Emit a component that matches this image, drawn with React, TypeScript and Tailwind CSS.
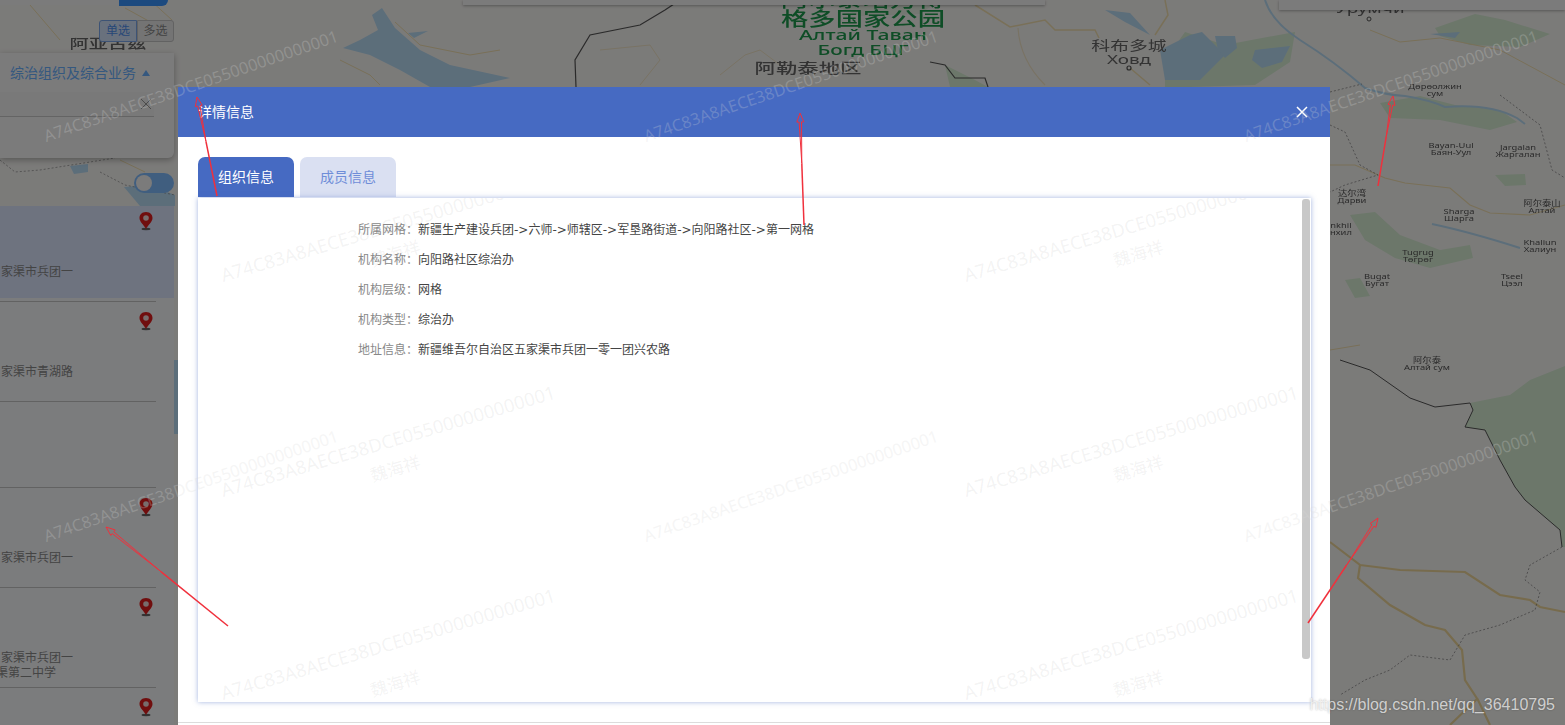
import React from 'react';

const cjk = "font-['DejaVu_Sans','Noto_Sans_CJK_SC',sans-serif]";

const MapLabel = ({ x, y, lines, big }: { x: number; y: number; lines: string[]; big?: boolean }) => (
  <>
    {lines.map((line, i) => (
      <text
        key={line}
        transform={`translate(${x} ${y + i * (big ? 14 : 7)}) scale(${big ? 1.45 : 1.25} 1)`}
        textAnchor="middle"
        fontSize={big ? 13 : 7.5}
        fill={big ? '#666' : '#555'}
        fontFamily="'Noto Sans','Noto Sans CJK SC',sans-serif"
      >
        {line}
      </text>
    ))}
  </>
);

const GreenLabel = ({ y, w, size, x = 863, fill = '#1c9a4c', children }: { y: number; w: number; size: number; x?: number; fill?: string; children: string }) => (
  <text
    x={x}
    y={y}
    textAnchor="middle"
    fontSize={size}
    fontWeight={500}
    fill={fill}
    textLength={w}
    lengthAdjust="spacingAndGlyphs"
    fontFamily="'Noto Sans','Noto Sans CJK SC',sans-serif"
  >
    {children}
  </text>
);

const MapBackground = () => (
  <svg className="absolute inset-0 blur-[0.6px]" width={1565} height={725} viewBox="0 0 1565 725">
    <rect width={1565} height={725} fill="#f7f6f3" />

    {/* green areas */}
    <path d="M1165 60 L1185 32 L1225 45 L1262 38 L1295 32 L1290 62 L1255 85 L1190 87 L1165 87 Z" fill="#d8efd4" />
    <path d="M1435 28 L1475 14 L1505 20 L1550 34 L1520 47 L1470 45 L1440 36 Z" fill="#d8efd4" />
    <path d="M1380 103 L1420 96 L1455 105 L1500 110 L1517 122 L1490 130 L1440 120 L1390 118 Z" fill="#d8efd4" />
    <path d="M1350 215 L1375 212 L1400 235 L1440 250 L1470 245 L1473 258 L1430 268 L1395 258 L1365 240 Z" fill="#d8efd4" />
    <path d="M1345 280 L1360 278 L1370 296 L1355 298 Z" fill="#d8efd4" />
    <path d="M1495 175 L1525 174 L1526 185 L1505 186 Z" fill="#d8efd4" />
    <path d="M1470 403 L1510 395 L1530 380 L1565 366 L1565 547 L1562 547 L1560 530 L1525 500 L1515 487 L1500 460 L1485 430 L1465 427 L1473 410 Z" fill="#d8efd4" />
    <path d="M945 65 L975 80 L988 87 L950 87 Z" fill="#d8efd4" />
    <path d="M820 0 L940 0 L920 14 L860 16 Z" fill="#e8f0e4" />

    {/* water */}
    <path d="M343 48 L360 40 L378 30 L372 15 L382 8 L395 28 L420 50 L450 65 L510 78 L470 87 L430 87 L400 70 L370 55 Z" fill="#b8dcf5" />
    <path d="M408 33 L428 31 L414 38 Z" fill="#b8dcf5" />
    <path d="M1160 50 L1190 35 L1202 32 L1225 55 L1200 80 L1165 80 Z" fill="#b8dcf5" />
    <path d="M1215 36 L1235 36 L1237 48 L1225 58 L1218 50 Z" fill="#b8dcf5" />
    <path d="M1255 50 L1290 46 L1282 62 L1262 68 L1252 60 Z" fill="#b8dcf5" />
    <path d="M1105 10 L1130 13 L1150 35 L1125 22 Z" fill="#b8dcf5" />
    <path d="M1265 0 Q1272 22 1300 40 Q1335 62 1365 88 Q1385 95 1405 96 Q1430 100 1445 107 Q1490 103 1517 118 L1525 124" fill="none" stroke="#b8dcf5" strokeWidth={2} />
    <path d="M1430 34 L1460 32 L1455 38 Z" fill="#b8dcf5" />
    <path d="M1432 224 Q1470 232 1520 248" fill="none" stroke="#b8dcf5" strokeWidth={2} />
    <path d="M124 187 L150 185 L175 195 L175 206 L140 206 Z" fill="#b8dcf5" />
    <path d="M70 166 L88 164 L88 172 L74 174 Z" fill="#b8dcf5" />
    <rect x={172} y={360} width={6} height={74} fill="#b8dcf5" />

    {/* roads */}
    <path d="M975 5 L1010 27 L1045 20 L1055 30 L1095 30 L1099 38 M1165 0 L1168 15 L1155 35 M1130 68 L1150 85" fill="none" stroke="#f2e0b0" strokeWidth={1.5} />
    <path d="M1018 28 Q1020 60 1045 85" fill="none" stroke="#f2e6c8" strokeWidth={1.2} />
    <path d="M1330 165 L1355 165 L1385 178 L1405 183 L1450 188 L1470 205 L1490 213 L1530 215 L1565 205" fill="none" stroke="#f2e0b0" strokeWidth={1.2} />
    <path d="M1330 350 L1360 345 M1370 30 L1400 42 L1440 38 L1500 50 L1565 85" fill="none" stroke="#f2e0b0" strokeWidth={1} />
    <path d="M1330 542 L1360 565 L1358 578 L1390 605 L1425 625 L1445 630 L1462 650 L1465 680 L1478 700 L1490 725 M1360 565 L1400 570 L1465 572 L1500 595 L1530 600 L1540 607 L1565 612 M1450 725 L1478 698" fill="none" stroke="#eed79a" strokeWidth={2.2} />
    <path d="M340 60 L370 75 L380 85 M500 50 L470 55 L420 45 L395 22 M30 5 L60 40 M125 8 L165 30 M150 0 L172 20 M120 160 L145 172" fill="none" stroke="#f2e0b0" strokeWidth={1} />
    <path d="M600 50 L650 45 L660 60 L640 85 M720 75 L745 55 L760 50 L780 65" fill="none" stroke="#f2e6c8" strokeWidth={1} />

    {/* borders */}
    <path d="M576 87 L575 60 L590 35 L640 25 L665 10 L680 0" fill="none" stroke="#555" strokeWidth={1.2} />
    <path d="M930 62 L945 65 L955 78 L985 78 L988 87" fill="none" stroke="#555" strokeWidth={1.2} />
    <path d="M1340 360 L1370 370 L1410 398 L1435 407 L1470 403 L1473 410 L1465 427 L1485 430 L1500 460 L1515 487 L1525 500 L1560 530 L1562 547" fill="none" stroke="#555" strokeWidth={1} />
    <path d="M1330 92 L1362 84 M1330 125 L1345 132 L1360 165 L1378 175 L1345 185 L1330 192 M1500 95 L1540 125 L1552 170 L1565 178 M1562 547 L1530 565 L1525 580 L1540 592 L1535 610 L1500 625 L1465 635 L1450 660 L1410 655 L1390 670 L1365 680 L1340 695" fill="none" stroke="#888" strokeWidth={0.8} strokeDasharray="2 2" />
    <path d="M0 160 L15 172 L40 170 L115 158 M100 172 L125 185 L175 195" fill="none" stroke="#888" strokeWidth={0.7} strokeDasharray="2 2" />

    {/* labels */}
    <GreenLabel y={7} w={164} size={19}>阿尔泰塔万博</GreenLabel>
    <GreenLabel y={26} w={164} size={19}>格多国家公园</GreenLabel>
    <GreenLabel y={40} w={128} size={14}>Алтай Таван</GreenLabel>
    <GreenLabel y={55} w={91} size={14}>Богд БЦГ</GreenLabel>
    <GreenLabel x={808} y={73} w={107} size={14} fill="#666">阿勒泰地区</GreenLabel>
    <GreenLabel x={108} y={48} w={77} size={13} fill="#666">阿亚古兹</GreenLabel>
    <MapLabel x={1129} y={50} lines={['科布多城', 'Ховд']} big />
    <circle cx={1129} cy={68} r={2} fill="none" stroke="#555" strokeWidth={1.2} />
    <MapLabel x={1370} y={13} lines={['Урумчи']} big />
    <circle cx={1369} cy={19} r={2} fill="none" stroke="#555" />
    <MapLabel x={1435} y={89} lines={['Дөрөолжин', 'сум']} />
    <MapLabel x={1451} y={148} lines={['Bayan-Uul', 'Баян-Уул']} />
    <MapLabel x={1518} y={150} lines={['Jargalan', 'Жаргалан']} />
    <MapLabel x={1352} y={196} lines={['达尔湾', 'Дарви']} />
    <MapLabel x={1341} y={228} lines={['nkhil', 'нхил']} />
    <MapLabel x={1459} y={214} lines={['Sharga', 'Шарга']} />
    <MapLabel x={1542} y={206} lines={['阿尔泰山', 'Алтай']} />
    <MapLabel x={1418} y={255} lines={['Tugrug', 'Төгрөг']} />
    <MapLabel x={1540} y={245} lines={['Khaliun', 'Халиун']} />
    <MapLabel x={1377} y={279} lines={['Bugat', 'Бугат']} />
    <MapLabel x={1512} y={279} lines={['Tseel', 'Цээл']} />
    <MapLabel x={1427} y={363} lines={['阿尔泰', 'Алтай сум']} />
  </svg>
);

const Pin = () => (
  <svg width={16} height={20} viewBox="0 0 16 20">
    <ellipse cx={8} cy={18} rx={4.5} ry={1.2} fill="#666" />
    <path d="M8 1 C3.6 1 1.5 4 1.5 7 C1.5 11 6 14 8 18 C10 14 14.5 11 14.5 7 C14.5 4 12.4 1 8 1 Z" fill="#e01c1c" />
    <circle cx={8} cy={7} r={2.8} fill="#f0d8d8" />
  </svg>
);

const listItems = [
  { height: 'h-[96px]', text: '家渠市兵团一', selected: true, pin: true },
  { height: 'h-[100px]', text: '家渠市青湖路', pin: true },
  { height: 'h-[86px]', text: '' },
  { height: 'h-[100px]', text: '家渠市兵团一', pin: true },
  { height: 'h-[100px]', text: '家渠市兵团一', extra: '渠第二中学', pin: true },
  { height: 'h-[100px]', text: '', pin: true },
];

const ListItem = ({ item }: { item: (typeof listItems)[number] }) => (
  <div className={`${item.height} w-full flex flex-col shrink-0`}>
    <div className={`flex-1 flex flex-col ${item.selected ? 'bg-[#dde6ff]' : ''}`}>
      <div className={`pr-[20px] flex justify-end ${item.selected ? 'h-[50px] pt-[5px]' : 'h-[54px] pt-[9px]'}`}>{item.pin && <Pin />}</div>
      <div className="h-[16px] mt-[8px] text-xs leading-[16px] text-[#888] whitespace-nowrap pl-[1px]">{item.text}</div>
      {item.extra && <div className="text-xs leading-[14px] text-[#888] whitespace-nowrap -ml-[4px]">{item.extra}</div>}
    </div>
    <div className={`${item.selected ? 'mt-[3px]' : ''} w-[156px] h-px bg-[#c4c4c4]`} />
  </div>
);

const Sidebar = () => (
  <div className={`absolute left-0 top-0 w-[174px] h-[725px] flex flex-col ${cjk}`}>
    <div className="flex h-[6px] w-[168px]">
      <div className="w-[119px] h-[5px] bg-[#f6f6f6]" />
      <div className="flex-1 bg-[#3894ff] rounded-br-[14px]" />
    </div>
    <div className="mt-[14px] ml-[99px] flex h-[22px] text-xs leading-[20px]">
      <div className="w-[38px] text-center bg-[#d3e2fb] border border-[#7aa7ea] rounded-l-[3px] text-[#4f90ee]">单选</div>
      <div className="w-[37px] text-center bg-[#e8e8e8] border border-[#c4c4c4] rounded-r-[3px] text-[#888]">多选</div>
    </div>
    <div className="mt-[11px] h-[105px] bg-[#f6f6f6] rounded-br-[6px] shadow-[0_2px_6px_rgba(0,0,0,0.3)] flex flex-col">
      <div className="h-[39px] pl-[10px] flex items-center gap-[6px] text-sm text-[#6ab0ff] whitespace-nowrap">
        综治组织及综合业务
        <div className="w-0 h-0 border-x-[4px] border-x-transparent border-b-[6px] border-b-[#6ab0ff]" />
      </div>
      <div className="h-[25px] w-[154px] bg-[#f2f2f2] border-b border-[#c8c8c8] flex justify-end items-center pr-[2px]">
        <svg width={12} height={12} viewBox="0 0 12 12" stroke="#999" strokeWidth={1}>
          <path d="M1 1 L11 11 M11 1 L1 11" />
        </svg>
      </div>
    </div>
    <div className="mt-[15px] ml-[134px] w-[40px] h-[20px] rounded-full bg-[#80bcff] p-[2px]">
      <div className="w-[16px] h-[16px] rounded-full bg-[#f6f6f6]" />
    </div>
    <div className="mt-[13px] flex-1 bg-[#f7f8fb] overflow-hidden flex flex-col">
      {listItems.map((item, i) => (
        <ListItem key={i} item={item} />
      ))}
    </div>
  </div>
);

const rows = [
  ['所属网格：', '新疆生产建设兵团->六师->师辖区->军垦路街道->向阳路社区->第一网格'],
  ['机构名称：', '向阳路社区综治办'],
  ['机构层级：', '网格'],
  ['机构类型：', '综治办'],
  ['地址信息：', '新疆维吾尔自治区五家渠市兵团一零一团兴农路'],
];

// watermarks printed inside the tab content, clipped by its box
const innerMarks = [
  { box: 'left-[26px] top-[68px]', name: 'left-[172px] top-[48px]' },
  { box: 'left-[769px] top-[68px]', name: 'left-[915px] top-[48px]' },
  { box: 'left-[26px] top-[283px]', name: 'left-[172px] top-[263px]' },
  { box: 'left-[769px] top-[283px]', name: 'left-[915px] top-[263px]' },
  { box: 'left-[26px] top-[486px]', name: 'left-[172px] top-[478px]' },
  { box: 'left-[769px] top-[486px]', name: 'left-[915px] top-[478px]' },
];

const Modal = () => (
  <div className={`absolute left-[178px] top-[87px] w-[1152px] h-[638px] bg-white flex flex-col ${cjk}`}>
    <div className="h-[50px] shrink-0 bg-[#466ac2] flex items-center justify-between pl-[20px] pr-[22px] text-white text-sm">
      <span>详情信息</span>
      <svg width={12} height={12} viewBox="0 0 12 12" stroke="#fff" strokeWidth={1.5}>
        <path d="M1 1 L11 11 M11 1 L1 11" />
      </svg>
    </div>
    <div className="mt-[20px] ml-[20px] flex gap-[6px] h-[40px] text-sm leading-[40px] text-center">
      <div className="w-[96px] rounded-t-[7px] bg-[#466ac2] text-white">组织信息</div>
      <div className="w-[96px] rounded-t-[7px] bg-[#dae0f2] text-[#6f8dd8]">成员信息</div>
    </div>
    <div className="relative ml-[20px] mt-[1px] w-[1113px] h-[504px] bg-white shadow-[0_0_5px_rgba(70,106,194,0.5)] overflow-hidden">
      <div className="absolute top-[1px] right-[1px] w-[8px] h-[460px] rounded-[3px] bg-[#c8c8c8]" />
      <div className="flex flex-col pt-[17px] pl-[160px] text-xs">
        {rows.map(([label, value]) => (
          <div key={label} className="h-[30px] leading-[30px] flex">
            <span className="w-[60px] text-[#888]">{label}</span>
            <span className="text-[#444]">{value}</span>
          </div>
        ))}
      </div>
      {innerMarks.map((m) => (
        <React.Fragment key={m.box}>
          <div className={`absolute ${m.box} origin-bottom-left -rotate-[16.5deg] whitespace-nowrap text-[18.5px] leading-none text-[#8a8a8a]/10 font-['Noto_Sans',sans-serif]`}>
            A74C83A8AECE38DCE055000000000001
          </div>
          <div className={`absolute ${m.name} -rotate-[16.5deg] whitespace-nowrap text-[17px] leading-none text-[#8a8a8a]/10`}>魏海祥</div>
        </React.Fragment>
      ))}
    </div>
    <div className="mt-auto h-px bg-[#dcdcdc] mb-[2px]" />
  </div>
);

const topMarks = [
  'left-[47px] top-[128px]',
  'left-[647px] top-[128px]',
  'left-[1247px] top-[128px]',
  'left-[47px] top-[528px]',
  'left-[647px] top-[528px]',
  'left-[1247px] top-[528px]',
];

const arrows = [
  [217, 196, 197, 97],
  [804, 225, 800, 113],
  [1378, 186, 1393, 96],
  [228, 626, 106, 527],
  [1308, 623, 1378, 518],
];

// screenshot annotation: solid tail, hollow shaft and head
const Arrow = ({ pts }: { pts: number[] }) => {
  const [x1, y1, x2, y2] = pts;
  const len = Math.hypot(x2 - x1, y2 - y1);
  const ux = (x2 - x1) / len;
  const uy = (y2 - y1) / len;
  const nx = -uy;
  const ny = ux;
  const mx = x1 + ux * len * 0.55;
  const my = y1 + uy * len * 0.55;
  const bx = x2 - ux * 9;
  const by = y2 - uy * 9;
  const outline = [
    [mx, my],
    [bx + nx * 1.2, by + ny * 1.2],
    [bx + nx * 3.5, by + ny * 3.5],
    [x2, y2],
    [bx - nx * 3.5, by - ny * 3.5],
    [bx - nx * 1.2, by - ny * 1.2],
  ]
    .map((p) => p.join(','))
    .join(' ');
  return (
    <g stroke="#f0303c" fill="none">
      <line x1={x1} y1={y1} x2={mx} y2={my} strokeWidth={1.5} />
      <polygon points={outline} strokeWidth={1} />
    </g>
  );
};

export default function App() {
  return (
    <div className="relative w-[1565px] h-[725px] overflow-hidden bg-[#f7f6f3]">
      <MapBackground />
      <Sidebar />
      <div className="absolute left-[463px] top-0 w-[582px] h-[5px] bg-[#f6f6f6] shadow-[0_1px_3px_rgba(0,0,0,0.3)]" />
      <div className="absolute left-[1279px] top-0 w-[286px] h-[10px] bg-[#f6f6f6] shadow-[0_1px_3px_rgba(0,0,0,0.3)]" />
      <div className="absolute inset-0 bg-black/50" />
      <Modal />
      {topMarks.map((pos) => (
        <div
          key={pos}
          className={`absolute ${pos} origin-bottom-left -rotate-[19deg] whitespace-nowrap text-[16.5px] leading-none text-[#d8d8d8]/25 font-['Noto_Sans',sans-serif]`}
        >
          A74C83A8AECE38DCE055000000000001
        </div>
      ))}
      <svg className="absolute inset-0 pointer-events-none" width={1565} height={725}>
        {arrows.map((pts) => (
          <Arrow key={pts[0]} pts={pts} />
        ))}
      </svg>
      <div className="absolute right-[10px] top-[695px] text-base leading-[20px] text-white/70 font-['Liberation_Sans',sans-serif] [text-shadow:0_0_2px_rgba(0,0,0,0.3)]">
        https://blog.csdn.net/qq_36410795
      </div>
    </div>
  );
}
